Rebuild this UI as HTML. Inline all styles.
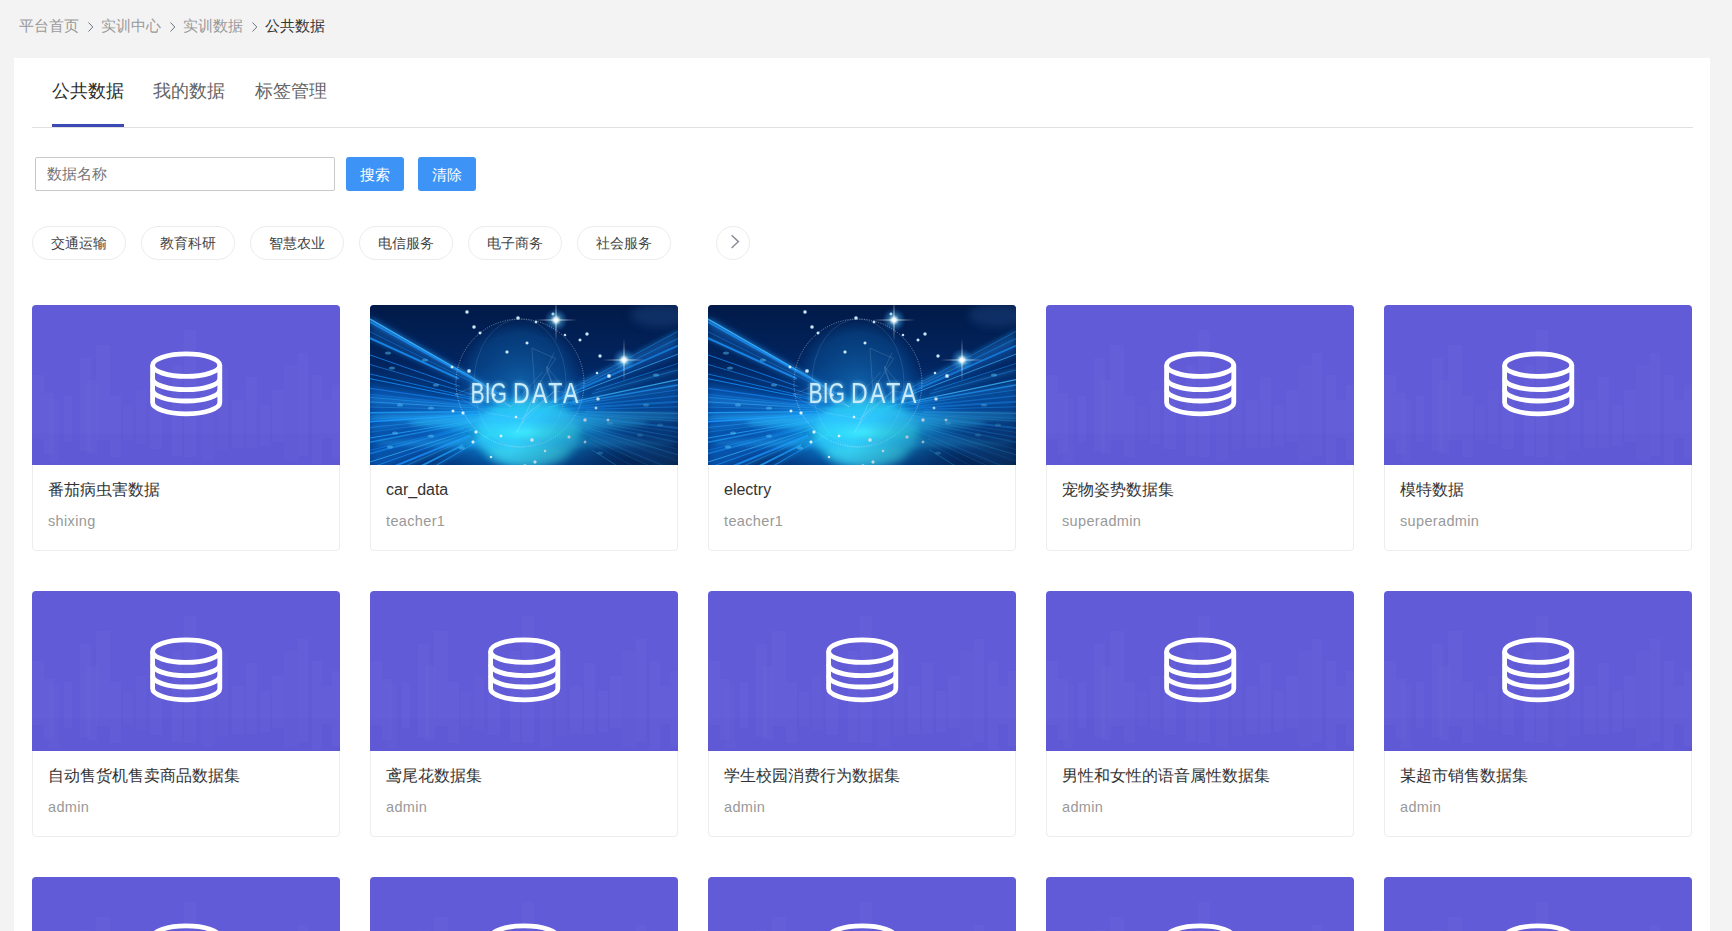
<!DOCTYPE html>
<html><head><meta charset="utf-8">
<style>
*{margin:0;padding:0;box-sizing:border-box}
html,body{width:1732px;height:931px;overflow:hidden;background:#f3f3f3;font-family:"Liberation Sans",sans-serif}
.abs{position:absolute}
.bc{position:absolute;top:17px;left:19px;font-size:15px;line-height:18px;color:#999;white-space:nowrap}
.bc span{position:absolute;top:0;white-space:nowrap}
.panel{position:absolute;left:14px;top:58px;width:1696px;height:900px;background:#fff}
.tab{position:absolute;top:80px;font-size:18px;line-height:22px;color:#646464;white-space:nowrap}
.tabline{position:absolute;left:32px;top:127px;width:1661px;height:1px;background:#e0e0e0}
.tabbar{position:absolute;left:52px;top:124px;width:72px;height:3px;background:#3a49b3}
.inp{position:absolute;left:35px;top:157px;width:300px;height:34px;border:1px solid #c9c9c9;border-radius:2px;background:#fff}
.inp span{position:absolute;left:11px;top:7px;font-size:15px;line-height:18px;color:#757575}
.btn{position:absolute;top:157px;width:58px;height:34px;background:#3d94f6;border-radius:3px;color:#fff;font-size:15px;line-height:36px;text-align:center}
.tag{position:absolute;top:226px;width:94px;height:34px;border:1px solid #ececec;border-radius:17px;font-size:14px;line-height:32px;text-align:center;color:#444}
.circ{position:absolute;left:716px;top:226px;width:34px;height:34px;border:1px solid #ececec;border-radius:50%}
.card{position:absolute;width:308px;height:246px;border:1px solid #ecedec;border-radius:4px;background:#fff}
.card .img{position:absolute;left:-1px;top:-1px;width:308px;height:160px;background:#615bd8;border-radius:4px 4px 0 0;overflow:hidden}
.card .img svg{position:absolute;left:0;top:0}
.card .t{position:absolute;left:15px;top:174px;font-size:16px;line-height:20px;color:#333;white-space:nowrap}
.card .a{position:absolute;left:15px;top:206px;letter-spacing:0.35px;font-size:14.5px;line-height:18px;color:#999;white-space:nowrap}
</style></head><body>
<div class="bc">
<span style="left:0">平台首页</span>
<span style="left:82px">实训中心</span>
<span style="left:164px">实训数据</span>
<span style="left:246px;color:#333">公共数据</span>
</div>
<svg class="abs" style="left:0;top:0" width="300" height="40"><g fill="none" stroke="#6b7580" stroke-width="1"><path d="M88.5 22.5 L92.8 27 L88.5 31.5"/><path d="M170.5 22.5 L174.8 27 L170.5 31.5"/><path d="M252.5 22.5 L256.8 27 L252.5 31.5"/></g></svg>
<div class="panel"></div>
<div class="tab" style="left:52px;color:#2b2b2b">公共数据</div>
<div class="tab" style="left:153px">我的数据</div>
<div class="tab" style="left:255px">标签管理</div>
<div class="tabline"></div>
<div class="tabbar"></div>
<div class="inp"><span>数据名称</span></div>
<div class="btn" style="left:346px">搜索</div>
<div class="btn" style="left:418px">清除</div>
<div class="tag" style="left:32px">交通运输</div>
<div class="tag" style="left:141px">教育科研</div>
<div class="tag" style="left:250px">智慧农业</div>
<div class="tag" style="left:359px">电信服务</div>
<div class="tag" style="left:468px">电子商务</div>
<div class="tag" style="left:577px">社会服务</div>
<div class="circ"><svg width="34" height="34" style="position:absolute;left:-1px;top:-1px"><path d="M15.6 9.2 L22.4 15.6 L15.6 22" fill="none" stroke="#8a8f99" stroke-width="1.5"/></svg></div>

<svg width="0" height="0" style="position:absolute">
<defs>
<symbol id="db" viewBox="0 0 308 160">
<g id="sky"><rect x="0" y="70" width="12" height="64" fill="#fff" fill-opacity="0.022"/><rect x="12" y="88" width="10" height="61" fill="#fff" fill-opacity="0.018"/><rect x="17" y="94" width="10" height="63" fill="#fff" fill-opacity="0.014"/><rect x="32" y="91" width="8" height="46" fill="#fff" fill-opacity="0.022"/><rect x="48" y="53" width="11" height="93" fill="#fff" fill-opacity="0.018"/><rect x="55" y="75" width="10" height="74" fill="#fff" fill-opacity="0.018"/><rect x="64" y="40" width="14" height="95" fill="#fff" fill-opacity="0.022"/><rect x="78" y="91" width="11" height="61" fill="#fff" fill-opacity="0.018"/><rect x="91" y="101" width="10" height="34" fill="#fff" fill-opacity="0.014"/><rect x="104" y="85" width="10" height="54" fill="#fff" fill-opacity="0.014"/><rect x="118" y="70" width="12" height="74" fill="#fff" fill-opacity="0.018"/><rect x="140" y="60" width="10" height="91" fill="#fff" fill-opacity="0.018"/><rect x="152" y="25" width="12" height="127" fill="#fff" fill-opacity="0.018"/><rect x="170" y="78" width="12" height="78" fill="#fff" fill-opacity="0.014"/><rect x="186" y="62" width="10" height="83" fill="#fff" fill-opacity="0.014"/><rect x="200" y="95" width="12" height="48" fill="#fff" fill-opacity="0.022"/><rect x="214" y="72" width="11" height="71" fill="#fff" fill-opacity="0.018"/><rect x="228" y="100" width="10" height="41" fill="#fff" fill-opacity="0.022"/><rect x="240" y="85" width="12" height="52" fill="#fff" fill-opacity="0.022"/><rect x="252" y="60" width="14" height="96" fill="#fff" fill-opacity="0.014"/><rect x="266" y="48" width="10" height="103" fill="#fff" fill-opacity="0.022"/><rect x="280" y="70" width="10" height="89" fill="#fff" fill-opacity="0.018"/><rect x="290" y="95" width="10" height="38" fill="#fff" fill-opacity="0.022"/><rect x="300" y="80" width="8" height="75" fill="#fff" fill-opacity="0.022"/><rect x="0" y="128" width="308" height="32" fill="#4a40c0" fill-opacity="0.06"/></g>
<g fill="none" stroke="#fff" stroke-width="4.8" stroke-linejoin="round">
<ellipse cx="154.2" cy="60.15" rx="33.6" ry="11.25"/>
<path d="M120.6 60.15 V97.6 A33.6 11.25 0 0 0 187.8 97.6 V60.15"/>
<path d="M120.6 73.4 A33.6 11.25 0 0 0 187.8 73.4"/>
<path d="M120.6 84.75 A33.6 11.25 0 0 0 187.8 84.75"/>
</g>
</symbol>
<symbol id="bigdata" viewBox="0 0 308 160">
<defs>
<linearGradient id="bgv" x1="0" y1="0" x2="0" y2="1">
<stop offset="0" stop-color="#011a48"/>
<stop offset="0.38" stop-color="#022560"/>
<stop offset="0.6" stop-color="#033f8a"/>
<stop offset="1" stop-color="#023478"/>
</linearGradient>
<radialGradient id="glow" cx="0.5" cy="0.5" r="0.5">
<stop offset="0" stop-color="#4ef4ff" stop-opacity="1"/>
<stop offset="0.3" stop-color="#1fd0ff" stop-opacity="0.8"/>
<stop offset="0.65" stop-color="#0e90e8" stop-opacity="0.4"/>
<stop offset="1" stop-color="#0a60c0" stop-opacity="0"/>
</radialGradient>
<radialGradient id="globeg" cx="0.5" cy="0.5" r="0.5">
<stop offset="0" stop-color="#1a8ad8" stop-opacity="0.5"/>
<stop offset="0.75" stop-color="#0e6ec0" stop-opacity="0.32"/>
<stop offset="1" stop-color="#0a60b8" stop-opacity="0"/>
</radialGradient>
<radialGradient id="flare" cx="0.5" cy="0.5" r="0.5">
<stop offset="0" stop-color="#ffffff" stop-opacity="1"/>
<stop offset="0.18" stop-color="#e8faff" stop-opacity="0.95"/>
<stop offset="0.45" stop-color="#6cd4ff" stop-opacity="0.4"/>
<stop offset="1" stop-color="#1a90ff" stop-opacity="0"/>
</radialGradient>
<radialGradient id="dotg" cx="0.5" cy="0.5" r="0.5">
<stop offset="0" stop-color="#ffffff" stop-opacity="1"/>
<stop offset="0.5" stop-color="#e0f4ff" stop-opacity="0.85"/>
<stop offset="1" stop-color="#80d0ff" stop-opacity="0"/>
</radialGradient>
<linearGradient id="hline" x1="0" y1="0" x2="1" y2="0">
<stop offset="0" stop-color="#fff" stop-opacity="0"/>
<stop offset="0.5" stop-color="#fff" stop-opacity="0.9"/>
<stop offset="1" stop-color="#fff" stop-opacity="0"/>
</linearGradient>
<linearGradient id="vline" x1="0" y1="0" x2="0" y2="1">
<stop offset="0" stop-color="#fff" stop-opacity="0"/>
<stop offset="0.5" stop-color="#fff" stop-opacity="0.9"/>
<stop offset="1" stop-color="#fff" stop-opacity="0"/>
</linearGradient>
<radialGradient id="cornerBR" cx="1" cy="1" r="0.55">
<stop offset="0" stop-color="#061535" stop-opacity="0.7"/>
<stop offset="1" stop-color="#061535" stop-opacity="0"/>
</radialGradient>
<filter id="bl1" x="-20%" y="-50%" width="140%" height="200%"><feGaussianBlur stdDeviation="0.7"/></filter>
<filter id="bl2" x="-20%" y="-50%" width="140%" height="200%"><feGaussianBlur stdDeviation="2"/></filter>
<filter id="bl4" x="-30%" y="-30%" width="160%" height="160%"><feGaussianBlur stdDeviation="4"/></filter>
</defs>
<rect width="308" height="160" fill="url(#bgv)"/>

<path d="M0 12 L0 30 L160 106 Z" fill="#1a7fe8" opacity="0.35" filter="url(#bl4)"/>
<path d="M308 30 L308 50 L160 106 Z" fill="#1a7fe8" opacity="0.35" filter="url(#bl4)"/>
<path d="M0 80 L0 170 L160 106 Z" fill="#0a6ad0" opacity="0.55" filter="url(#bl4)"/>
<path d="M308 80 L308 170 L160 106 Z" fill="#0a6ad0" opacity="0.5" filter="url(#bl4)"/>
<line x1="0" y1="14.1" x2="113.3" y2="79.2" stroke="#40b8ff" stroke-width="1.4" stroke-opacity="0.89"/>
<line x1="0" y1="14.1" x2="113.3" y2="79.2" stroke="#3ab0ff" stroke-width="3" stroke-opacity="0.3" filter="url(#bl2)"/>
<line x1="0" y1="16.8" x2="132.4" y2="90.6" stroke="#1590ff" stroke-width="2.0" stroke-opacity="0.71"/>
<line x1="0" y1="16.8" x2="132.4" y2="90.6" stroke="#3ab0ff" stroke-width="3" stroke-opacity="0.3" filter="url(#bl2)"/>
<line x1="0" y1="26.7" x2="121.3" y2="86.8" stroke="#1a8cf0" stroke-width="0.6" stroke-opacity="0.74"/>
<line x1="0" y1="33.1" x2="88.8" y2="73.6" stroke="#1590ff" stroke-width="2.0" stroke-opacity="0.79"/>
<line x1="0" y1="33.1" x2="88.8" y2="73.6" stroke="#3ab0ff" stroke-width="3" stroke-opacity="0.3" filter="url(#bl2)"/>
<line x1="0" y1="49.9" x2="89.7" y2="81.3" stroke="#1590ff" stroke-width="0.8" stroke-opacity="0.90"/>
<line x1="0" y1="59.5" x2="116.0" y2="93.2" stroke="#1a90ff" stroke-width="0.8" stroke-opacity="0.73"/>
<line x1="0" y1="69.0" x2="143.8" y2="102.2" stroke="#1590ff" stroke-width="1.0" stroke-opacity="0.68"/>
<line x1="0" y1="73.7" x2="104.2" y2="94.7" stroke="#1590ff" stroke-width="1.0" stroke-opacity="0.84"/>
<line x1="0" y1="83.4" x2="109.6" y2="98.9" stroke="#1a90ff" stroke-width="1.4" stroke-opacity="0.55"/>
<line x1="0" y1="89.4" x2="114.3" y2="101.3" stroke="#1a8cf0" stroke-width="0.6" stroke-opacity="0.60"/>
<line x1="0" y1="92.3" x2="131.6" y2="103.6" stroke="#22a6ff" stroke-width="0.6" stroke-opacity="0.75"/>
<line x1="0" y1="92.3" x2="131.6" y2="103.6" stroke="#3ab0ff" stroke-width="3" stroke-opacity="0.3" filter="url(#bl2)"/>
<line x1="0" y1="96.9" x2="130.5" y2="104.3" stroke="#40b8ff" stroke-width="1.0" stroke-opacity="0.51"/>
<line x1="0" y1="96.9" x2="130.5" y2="104.3" stroke="#3ab0ff" stroke-width="3" stroke-opacity="0.3" filter="url(#bl2)"/>
<line x1="0" y1="102.0" x2="132.6" y2="105.3" stroke="#40b8ff" stroke-width="0.6" stroke-opacity="0.50"/>
<line x1="0" y1="107.7" x2="111.5" y2="106.5" stroke="#22a6ff" stroke-width="1.4" stroke-opacity="0.73"/>
<line x1="0" y1="114.2" x2="105.0" y2="108.8" stroke="#1590ff" stroke-width="0.8" stroke-opacity="0.50"/>
<line x1="0" y1="114.2" x2="105.0" y2="108.8" stroke="#3ab0ff" stroke-width="3" stroke-opacity="0.3" filter="url(#bl2)"/>
<line x1="0" y1="116.8" x2="123.9" y2="108.4" stroke="#1590ff" stroke-width="1.4" stroke-opacity="0.95"/>
<line x1="0" y1="122.5" x2="131.3" y2="109.0" stroke="#1a8cf0" stroke-width="0.8" stroke-opacity="0.70"/>
<line x1="0" y1="122.5" x2="131.3" y2="109.0" stroke="#3ab0ff" stroke-width="3" stroke-opacity="0.3" filter="url(#bl2)"/>
<line x1="0" y1="127.2" x2="120.6" y2="111.2" stroke="#22a6ff" stroke-width="0.6" stroke-opacity="0.53"/>
<line x1="0" y1="133.0" x2="141.7" y2="109.1" stroke="#22a6ff" stroke-width="1.0" stroke-opacity="0.78"/>
<line x1="0" y1="137.2" x2="105.4" y2="116.6" stroke="#22a6ff" stroke-width="1.4" stroke-opacity="0.58"/>
<line x1="0" y1="145.4" x2="99.0" y2="121.0" stroke="#1590ff" stroke-width="0.8" stroke-opacity="0.57"/>
<line x1="0" y1="148.6" x2="93.8" y2="123.6" stroke="#1a8cf0" stroke-width="2.0" stroke-opacity="0.54"/>
<line x1="0" y1="157.0" x2="102.4" y2="124.4" stroke="#40b8ff" stroke-width="0.8" stroke-opacity="0.83"/>
<line x1="0" y1="162.9" x2="95.1" y2="129.1" stroke="#1a8cf0" stroke-width="1.0" stroke-opacity="0.73"/>
<line x1="0" y1="171.2" x2="99.9" y2="130.5" stroke="#1a90ff" stroke-width="2.0" stroke-opacity="0.78"/>
<line x1="0" y1="176.6" x2="101.9" y2="131.6" stroke="#40b8ff" stroke-width="0.6" stroke-opacity="0.62"/>
<line x1="0" y1="176.6" x2="101.9" y2="131.6" stroke="#3ab0ff" stroke-width="3" stroke-opacity="0.3" filter="url(#bl2)"/>
<line x1="0" y1="186.9" x2="93.2" y2="139.8" stroke="#22a6ff" stroke-width="2.0" stroke-opacity="0.76"/>
<line x1="0" y1="198.9" x2="120.7" y2="128.8" stroke="#1590ff" stroke-width="1.0" stroke-opacity="0.80"/>
<line x1="0" y1="198.9" x2="120.7" y2="128.8" stroke="#3ab0ff" stroke-width="3" stroke-opacity="0.3" filter="url(#bl2)"/>
<line x1="308" y1="26.4" x2="190.3" y2="89.7" stroke="#1a90ff" stroke-width="0.6" stroke-opacity="0.71"/>
<line x1="308" y1="26.4" x2="190.3" y2="89.7" stroke="#3ab0ff" stroke-width="3" stroke-opacity="0.3" filter="url(#bl2)"/>
<line x1="308" y1="33.5" x2="210.1" y2="81.5" stroke="#1a90ff" stroke-width="0.6" stroke-opacity="0.72"/>
<line x1="308" y1="33.5" x2="210.1" y2="81.5" stroke="#3ab0ff" stroke-width="3" stroke-opacity="0.3" filter="url(#bl2)"/>
<line x1="308" y1="40.7" x2="180.0" y2="97.2" stroke="#1a8cf0" stroke-width="2.0" stroke-opacity="0.67"/>
<line x1="308" y1="49.1" x2="179.9" y2="98.3" stroke="#40b8ff" stroke-width="1.0" stroke-opacity="0.66"/>
<line x1="308" y1="58.5" x2="225.8" y2="84.9" stroke="#1590ff" stroke-width="0.6" stroke-opacity="0.89"/>
<line x1="308" y1="64.8" x2="221.9" y2="88.8" stroke="#1a8cf0" stroke-width="0.6" stroke-opacity="0.77"/>
<line x1="308" y1="64.8" x2="221.9" y2="88.8" stroke="#3ab0ff" stroke-width="3" stroke-opacity="0.3" filter="url(#bl2)"/>
<line x1="308" y1="74.6" x2="178.2" y2="102.1" stroke="#40b8ff" stroke-width="1.4" stroke-opacity="0.83"/>
<line x1="308" y1="80.0" x2="199.7" y2="99.0" stroke="#1a8cf0" stroke-width="1.4" stroke-opacity="0.88"/>
<line x1="308" y1="80.0" x2="199.7" y2="99.0" stroke="#3ab0ff" stroke-width="3" stroke-opacity="0.3" filter="url(#bl2)"/>
<line x1="308" y1="84.8" x2="177.0" y2="103.6" stroke="#22a6ff" stroke-width="0.6" stroke-opacity="0.72"/>
<line x1="308" y1="90.9" x2="207.5" y2="101.2" stroke="#1a8cf0" stroke-width="1.4" stroke-opacity="0.62"/>
<line x1="308" y1="96.8" x2="192.4" y2="104.0" stroke="#1a90ff" stroke-width="2.0" stroke-opacity="0.58"/>
<line x1="308" y1="101.8" x2="216.3" y2="104.4" stroke="#1a90ff" stroke-width="1.0" stroke-opacity="0.68"/>
<line x1="308" y1="108.3" x2="215.2" y2="106.8" stroke="#40b8ff" stroke-width="0.8" stroke-opacity="0.90"/>
<line x1="308" y1="108.3" x2="215.2" y2="106.8" stroke="#3ab0ff" stroke-width="3" stroke-opacity="0.3" filter="url(#bl2)"/>
<line x1="308" y1="113.4" x2="189.8" y2="107.5" stroke="#1a8cf0" stroke-width="0.8" stroke-opacity="0.72"/>
<line x1="308" y1="113.4" x2="189.8" y2="107.5" stroke="#3ab0ff" stroke-width="3" stroke-opacity="0.3" filter="url(#bl2)"/>
<line x1="308" y1="116.1" x2="212.3" y2="109.6" stroke="#40b8ff" stroke-width="0.8" stroke-opacity="0.55"/>
<line x1="308" y1="123.0" x2="189.5" y2="109.4" stroke="#1a90ff" stroke-width="2.0" stroke-opacity="0.72"/>
<line x1="308" y1="127.3" x2="212.2" y2="113.5" stroke="#1a8cf0" stroke-width="1.0" stroke-opacity="0.53"/>
<line x1="308" y1="132.2" x2="193.0" y2="111.8" stroke="#1a90ff" stroke-width="1.0" stroke-opacity="0.76"/>
<line x1="308" y1="137.3" x2="186.8" y2="111.7" stroke="#1a8cf0" stroke-width="1.4" stroke-opacity="0.70"/>
<line x1="308" y1="144.4" x2="203.5" y2="117.3" stroke="#1a8cf0" stroke-width="0.6" stroke-opacity="0.94"/>
<line x1="308" y1="149.9" x2="216.3" y2="122.7" stroke="#22a6ff" stroke-width="1.0" stroke-opacity="0.93"/>
<line x1="308" y1="149.9" x2="216.3" y2="122.7" stroke="#3ab0ff" stroke-width="3" stroke-opacity="0.3" filter="url(#bl2)"/>
<line x1="308" y1="156.0" x2="189.6" y2="116.0" stroke="#1590ff" stroke-width="0.6" stroke-opacity="0.84"/>
<line x1="308" y1="156.0" x2="189.6" y2="116.0" stroke="#3ab0ff" stroke-width="3" stroke-opacity="0.3" filter="url(#bl2)"/>
<line x1="308" y1="166.5" x2="200.7" y2="122.6" stroke="#1590ff" stroke-width="1.0" stroke-opacity="0.74"/>
<line x1="308" y1="166.5" x2="200.7" y2="122.6" stroke="#3ab0ff" stroke-width="3" stroke-opacity="0.3" filter="url(#bl2)"/>
<line x1="308" y1="173.9" x2="219.9" y2="133.5" stroke="#40b8ff" stroke-width="0.8" stroke-opacity="0.54"/>
<line x1="308" y1="185.0" x2="192.8" y2="123.5" stroke="#1590ff" stroke-width="0.6" stroke-opacity="0.67"/>
<line x1="308" y1="199.1" x2="221.5" y2="144.7" stroke="#22a6ff" stroke-width="1.0" stroke-opacity="0.71"/>
<circle cx="150" cy="76" r="64" fill="url(#globeg)"/>
<ellipse cx="158" cy="126" rx="125" ry="50" fill="url(#glow)"/>
<ellipse cx="158" cy="128" rx="52" ry="34" fill="#3ae8ff" opacity="0.6" filter="url(#bl4)"/>
<ellipse cx="158" cy="150" rx="40" ry="14" fill="#5af0ff" opacity="0.25" filter="url(#bl4)"/>
<ellipse cx="158" cy="118" rx="120" ry="7" fill="#30c8ff" opacity="0.45" filter="url(#bl2)"/>
<ellipse cx="156" cy="112" rx="160" ry="6" fill="#2ab8ff" opacity="0.4" filter="url(#bl2)"/>
<ellipse cx="156" cy="138" rx="150" ry="5" fill="#2ab8ff" opacity="0.35" filter="url(#bl2)"/>
<circle cx="150" cy="78" r="64" fill="none" stroke="#e0f4ff" stroke-opacity="0.55" stroke-width="0.9" stroke-dasharray="1 1.4"/>
<ellipse cx="150" cy="78" rx="46" ry="64" fill="none" stroke="#bfe8ff" stroke-opacity="0.22" stroke-width="0.6"/>
<line x1="117.9" y1="107.7" x2="151.8" y2="114.0" stroke="#cfeeff" stroke-opacity="0.3" stroke-width="0.5"/>
<line x1="165.2" y1="90.6" x2="162.0" y2="43.2" stroke="#cfeeff" stroke-opacity="0.3" stroke-width="0.5"/>
<line x1="171.4" y1="75.1" x2="151.0" y2="118.5" stroke="#cfeeff" stroke-opacity="0.3" stroke-width="0.5"/>
<line x1="171.4" y1="75.1" x2="185.6" y2="53.6" stroke="#cfeeff" stroke-opacity="0.3" stroke-width="0.5"/>
<line x1="162.0" y1="43.2" x2="185.6" y2="53.6" stroke="#cfeeff" stroke-opacity="0.3" stroke-width="0.5"/>
<line x1="151.0" y1="118.5" x2="146.6" y2="127.6" stroke="#cfeeff" stroke-opacity="0.3" stroke-width="0.5"/>
<line x1="184.8" y1="85.8" x2="176.3" y2="64.2" stroke="#cfeeff" stroke-opacity="0.3" stroke-width="0.5"/>
<line x1="184.0" y1="47.7" x2="176.3" y2="64.2" stroke="#cfeeff" stroke-opacity="0.3" stroke-width="0.5"/>
<line x1="85.1" y1="89.5" x2="111.1" y2="78.5" stroke="#cfeeff" stroke-opacity="0.3" stroke-width="0.5"/>
<line x1="171.4" y1="75.1" x2="151.5" y2="118.8" stroke="#cfeeff" stroke-opacity="0.3" stroke-width="0.5"/>
<line x1="151.8" y1="114.0" x2="184.8" y2="85.8" stroke="#cfeeff" stroke-opacity="0.3" stroke-width="0.5"/>
<line x1="141.1" y1="101.7" x2="121.2" y2="92.7" stroke="#cfeeff" stroke-opacity="0.3" stroke-width="0.5"/>
<line x1="146.0" y1="128.2" x2="167.5" y2="94.0" stroke="#cfeeff" stroke-opacity="0.3" stroke-width="0.5"/>
<line x1="184.8" y1="85.8" x2="151.8" y2="114.0" stroke="#cfeeff" stroke-opacity="0.3" stroke-width="0.5"/>
<line x1="151.5" y1="118.8" x2="184.8" y2="85.8" stroke="#cfeeff" stroke-opacity="0.3" stroke-width="0.5"/>
<line x1="184.8" y1="85.8" x2="176.5" y2="61.4" stroke="#cfeeff" stroke-opacity="0.3" stroke-width="0.5"/>
<line x1="111.1" y1="78.5" x2="87.0" y2="61.0" stroke="#cfeeff" stroke-opacity="0.3" stroke-width="0.5"/>
<line x1="117.9" y1="107.7" x2="89.7" y2="93.1" stroke="#cfeeff" stroke-opacity="0.3" stroke-width="0.5"/>
<line x1="141.1" y1="101.7" x2="172.8" y2="66.8" stroke="#cfeeff" stroke-opacity="0.3" stroke-width="0.5"/>
<line x1="141.1" y1="101.7" x2="111.1" y2="78.5" stroke="#cfeeff" stroke-opacity="0.3" stroke-width="0.5"/>
<line x1="85.1" y1="89.5" x2="131.3" y2="87.8" stroke="#cfeeff" stroke-opacity="0.3" stroke-width="0.5"/>
<line x1="193.4" y1="87.3" x2="184.8" y2="85.8" stroke="#cfeeff" stroke-opacity="0.3" stroke-width="0.5"/>
<line x1="176.5" y1="61.4" x2="193.0" y2="82.0" stroke="#cfeeff" stroke-opacity="0.3" stroke-width="0.5"/>
<line x1="85.1" y1="89.5" x2="89.7" y2="93.1" stroke="#cfeeff" stroke-opacity="0.3" stroke-width="0.5"/>
<line x1="103.2" y1="78.1" x2="141.1" y2="101.7" stroke="#cfeeff" stroke-opacity="0.3" stroke-width="0.5"/>
<circle cx="97" cy="7" r="2.4" fill="url(#dotg)"/>
<circle cx="104" cy="22" r="2.4" fill="url(#dotg)"/>
<circle cx="110" cy="28" r="2.1" fill="url(#dotg)"/>
<circle cx="148" cy="13" r="2.4" fill="url(#dotg)"/>
<circle cx="166" cy="17" r="1.9" fill="url(#dotg)"/>
<circle cx="157" cy="38" r="2.1" fill="url(#dotg)"/>
<circle cx="137" cy="47" r="2.2" fill="url(#dotg)"/>
<circle cx="195" cy="30" r="1.8" fill="url(#dotg)"/>
<circle cx="210" cy="35" r="2.1" fill="url(#dotg)"/>
<circle cx="217" cy="29" r="2.3" fill="url(#dotg)"/>
<circle cx="230" cy="51" r="2.3" fill="url(#dotg)"/>
<circle cx="82" cy="62" r="2.0" fill="url(#dotg)"/>
<circle cx="99" cy="66" r="2.6" fill="url(#dotg)"/>
<circle cx="124" cy="90" r="2.3" fill="url(#dotg)"/>
<circle cx="83" cy="106" r="2.1" fill="url(#dotg)"/>
<circle cx="93" cy="108" r="2.3" fill="url(#dotg)"/>
<circle cx="106" cy="127" r="2.3" fill="url(#dotg)"/>
<circle cx="103" cy="137" r="2.2" fill="url(#dotg)"/>
<circle cx="131" cy="131" r="2.1" fill="url(#dotg)"/>
<circle cx="162" cy="135" r="2.6" fill="url(#dotg)"/>
<circle cx="199" cy="132" r="2.3" fill="url(#dotg)"/>
<circle cx="215" cy="115" r="2.4" fill="url(#dotg)"/>
<circle cx="228" cy="94" r="2.4" fill="url(#dotg)"/>
<circle cx="239" cy="71" r="2.6" fill="url(#dotg)"/>
<circle cx="121" cy="152" r="1.8" fill="url(#dotg)"/>
<circle cx="165" cy="157" r="2.3" fill="url(#dotg)"/>
<circle cx="155" cy="161" r="2.4" fill="url(#dotg)"/>
<circle cx="215" cy="137" r="2.0" fill="url(#dotg)"/>
<circle cx="238" cy="115" r="2.1" fill="url(#dotg)"/>
<circle cx="227" cy="68" r="1.8" fill="url(#dotg)"/>
<circle cx="146" cy="112" r="2.0" fill="url(#dotg)"/>
<circle cx="183" cy="9" r="2.1" fill="url(#dotg)"/>
<circle cx="175" cy="146" r="1.9" fill="url(#dotg)"/>
<circle cx="226" cy="103" r="2.0" fill="url(#dotg)"/>
<ellipse cx="18" cy="48" rx="3" ry="1.6" fill="#5cd0ff" opacity="0.45" filter="url(#bl1)"/>
<ellipse cx="55" cy="55" rx="3" ry="1.6" fill="#5cd0ff" opacity="0.45" filter="url(#bl1)"/>
<ellipse cx="66" cy="80" rx="3" ry="1.6" fill="#5cd0ff" opacity="0.45" filter="url(#bl1)"/>
<ellipse cx="22" cy="63" rx="3" ry="1.6" fill="#5cd0ff" opacity="0.45" filter="url(#bl1)"/>
<ellipse cx="30" cy="100" rx="3" ry="1.6" fill="#5cd0ff" opacity="0.45" filter="url(#bl1)"/>
<ellipse cx="61" cy="103" rx="3" ry="1.6" fill="#5cd0ff" opacity="0.45" filter="url(#bl1)"/>
<ellipse cx="25" cy="128" rx="3" ry="1.6" fill="#5cd0ff" opacity="0.45" filter="url(#bl1)"/>
<ellipse cx="61" cy="131" rx="3" ry="1.6" fill="#5cd0ff" opacity="0.45" filter="url(#bl1)"/>
<ellipse cx="20" cy="142" rx="3" ry="1.6" fill="#5cd0ff" opacity="0.45" filter="url(#bl1)"/>
<ellipse cx="276" cy="100" rx="3" ry="1.6" fill="#5cd0ff" opacity="0.45" filter="url(#bl1)"/>
<ellipse cx="290" cy="120" rx="3" ry="1.6" fill="#5cd0ff" opacity="0.45" filter="url(#bl1)"/>
<ellipse cx="270" cy="130" rx="3" ry="1.6" fill="#5cd0ff" opacity="0.45" filter="url(#bl1)"/>
<ellipse cx="286" cy="70" rx="3" ry="1.6" fill="#5cd0ff" opacity="0.45" filter="url(#bl1)"/>
<ellipse cx="240" cy="118" rx="3" ry="1.6" fill="#5cd0ff" opacity="0.45" filter="url(#bl1)"/>
<ellipse cx="230" cy="148" rx="3" ry="1.6" fill="#5cd0ff" opacity="0.45" filter="url(#bl1)"/>
<ellipse cx="92" cy="143" rx="3" ry="1.6" fill="#5cd0ff" opacity="0.45" filter="url(#bl1)"/>
<circle cx="186" cy="15" r="12" fill="url(#flare)"/>
<rect x="164.4" y="14.5" width="43.2" height="1" fill="url(#hline)"/>
<rect x="185.5" y="-6.600000000000001" width="1" height="43.2" fill="url(#vline)"/>
<circle cx="254" cy="55" r="12" fill="url(#flare)"/>
<rect x="232.4" y="54.5" width="43.2" height="1" fill="url(#hline)"/>
<rect x="253.5" y="33.4" width="1" height="43.2" fill="url(#vline)"/>
<rect width="308" height="160" fill="url(#cornerBR)"/>
<ellipse cx="290" cy="10" rx="30" ry="12" fill="#3a6ab0" opacity="0.25" filter="url(#bl4)"/>
<g font-family="Liberation Sans" font-size="29" fill="#7fe0ff" opacity="0.9" filter="url(#bl2)"><text x="100.5" y="97.8" textLength="36.5" lengthAdjust="spacingAndGlyphs">BIG</text><text x="143" y="97.8" textLength="67.7" lengthAdjust="spacingAndGlyphs" letter-spacing="3">DATA</text></g>
<g font-family="Liberation Sans" font-size="29" fill="#d6f3ff" opacity="0.92"><text x="100.5" y="97.8" textLength="36.5" lengthAdjust="spacingAndGlyphs">BIG</text><text x="143" y="97.8" textLength="67.7" lengthAdjust="spacingAndGlyphs" letter-spacing="3">DATA</text></g>
</symbol>
</defs>
</svg>

<div class="card" style="left:32px;top:305px"><div class="img"><svg width="308" height="160"><use href="#db"/></svg></div><div class="t">番茄病虫害数据</div><div class="a">shixing</div></div>
<div class="card" style="left:370px;top:305px"><div class="img big"><svg width="308" height="160"><use href="#bigdata"/></svg></div><div class="t">car_data</div><div class="a">teacher1</div></div>
<div class="card" style="left:708px;top:305px"><div class="img big"><svg width="308" height="160"><use href="#bigdata"/></svg></div><div class="t">electry</div><div class="a">teacher1</div></div>
<div class="card" style="left:1046px;top:305px"><div class="img"><svg width="308" height="160"><use href="#db"/></svg></div><div class="t">宠物姿势数据集</div><div class="a">superadmin</div></div>
<div class="card" style="left:1384px;top:305px"><div class="img"><svg width="308" height="160"><use href="#db"/></svg></div><div class="t">模特数据</div><div class="a">superadmin</div></div>
<div class="card" style="left:32px;top:591px"><div class="img"><svg width="308" height="160"><use href="#db"/></svg></div><div class="t">自动售货机售卖商品数据集</div><div class="a">admin</div></div>
<div class="card" style="left:370px;top:591px"><div class="img"><svg width="308" height="160"><use href="#db"/></svg></div><div class="t">鸢尾花数据集</div><div class="a">admin</div></div>
<div class="card" style="left:708px;top:591px"><div class="img"><svg width="308" height="160"><use href="#db"/></svg></div><div class="t">学生校园消费行为数据集</div><div class="a">admin</div></div>
<div class="card" style="left:1046px;top:591px"><div class="img"><svg width="308" height="160"><use href="#db"/></svg></div><div class="t">男性和女性的语音属性数据集</div><div class="a">admin</div></div>
<div class="card" style="left:1384px;top:591px"><div class="img"><svg width="308" height="160"><use href="#db"/></svg></div><div class="t">某超市销售数据集</div><div class="a">admin</div></div>
<div class="card" style="left:32px;top:877px"><div class="img"><svg width="308" height="160"><use href="#db"/></svg></div><div class="t"></div><div class="a"></div></div>
<div class="card" style="left:370px;top:877px"><div class="img"><svg width="308" height="160"><use href="#db"/></svg></div><div class="t"></div><div class="a"></div></div>
<div class="card" style="left:708px;top:877px"><div class="img"><svg width="308" height="160"><use href="#db"/></svg></div><div class="t"></div><div class="a"></div></div>
<div class="card" style="left:1046px;top:877px"><div class="img"><svg width="308" height="160"><use href="#db"/></svg></div><div class="t"></div><div class="a"></div></div>
<div class="card" style="left:1384px;top:877px"><div class="img"><svg width="308" height="160"><use href="#db"/></svg></div><div class="t"></div><div class="a"></div></div>
</body></html>
